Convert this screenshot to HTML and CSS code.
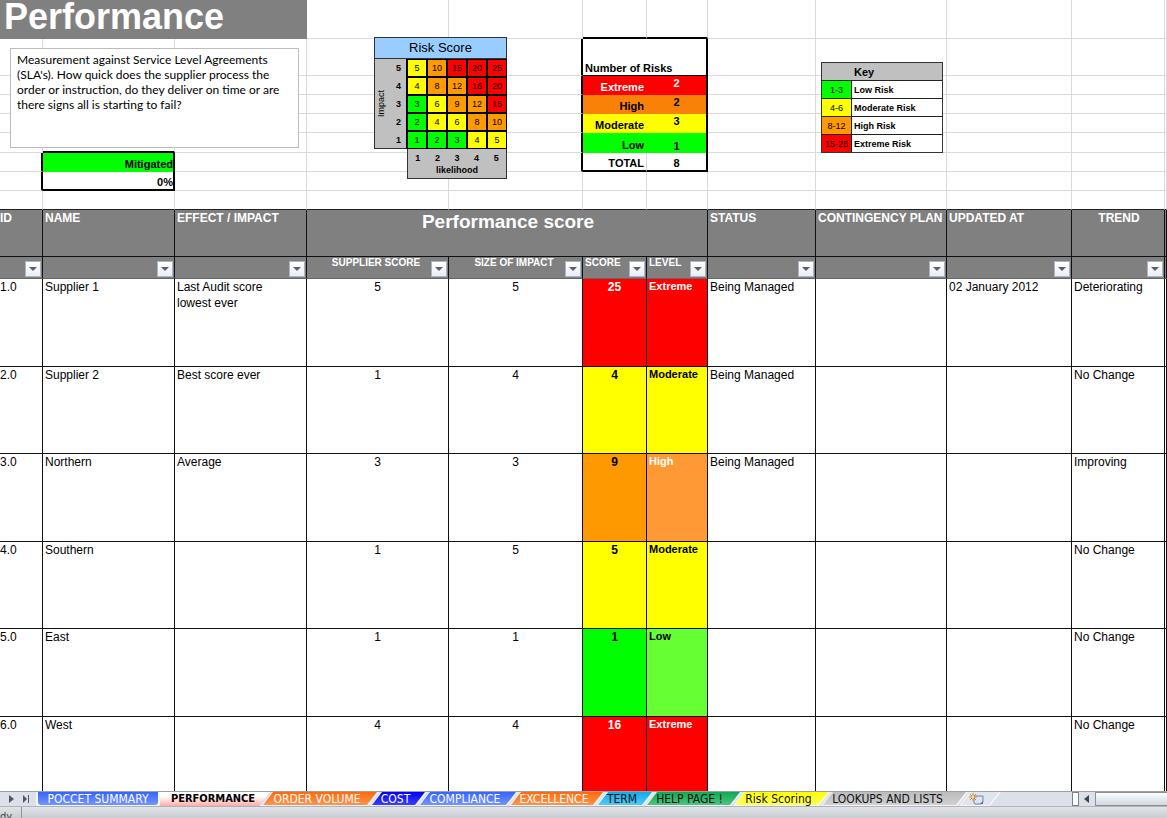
FILE: index.html
```html
<!DOCTYPE html>
<html lang="en">
<head>
<meta charset="utf-8">
<title>Performance</title>
<link rel="stylesheet" href="styles.css">
</head>
<body>
<main class="sheet">
<table class="cells">
<colgroup><col class="c-id"><col class="c-name"><col class="c-name"><col class="c-supplier"><col class="c-size"><col class="c-score"><col class="c-level"><col class="c-status"><col class="c-plan"><col class="c-updated"><col class="c-trend"><col class="c-rest"></colgroup>
<tbody class="top">
<tr class="r-title"><td colspan="3" class="title"><h1>Performance</h1></td><td></td><td></td><td class="line-b"></td><td class="line-b"></td><td></td><td></td><td></td><td></td><td></td></tr>
<tr class="r-tall"><td></td><td></td><td></td><td></td><td class="line-r"></td><td colspan="2" class="line-r thin-b risks-head">Number of Risks</td><td></td><td></td><td></td><td></td><td></td></tr>
<tr><td></td><td></td><td></td><td></td><td class="line-r"></td><td class="risk extreme">Extreme</td><td class="count extreme line-r">2</td><td></td><td></td><td></td><td></td><td></td></tr>
<tr><td></td><td></td><td></td><td></td><td class="line-r"></td><td class="risk high">High</td><td class="count high line-r">2</td><td></td><td></td><td></td><td></td><td></td></tr>
<tr><td></td><td></td><td></td><td></td><td class="line-r"></td><td class="risk moderate">Moderate</td><td class="count moderate line-r">3</td><td></td><td></td><td></td><td></td><td></td></tr>
<tr class="r-mid"><td></td><td class="line-b"></td><td></td><td></td><td class="line-r"></td><td class="risk low">Low</td><td class="count low low-count line-r">1</td><td></td><td></td><td></td><td></td><td></td></tr>
<tr><td class="line-r"></td><td class="mitigated line-r">Mitigated</td><td></td><td></td><td class="line-r"></td><td class="risk line-b">TOTAL</td><td class="count total line-r line-b">8</td><td></td><td></td><td></td><td></td><td></td></tr>
<tr><td class="line-r"></td><td class="percent line-r line-b">0%</td><td></td><td></td><td></td><td></td><td></td><td></td><td></td><td></td><td></td><td></td></tr>
<tr class="r-last"><td></td><td></td><td></td><td></td><td></td><td></td><td></td><td></td><td></td><td></td><td></td><td></td></tr>
</tbody>
<tbody class="head">
<tr class="r-names"><th class="first" scope="col">ID</th><th scope="col">NAME</th><th scope="col">EFFECT / IMPACT</th><th class="group" colspan="4" scope="colgroup">Performance score</th><th scope="col">STATUS</th><th scope="col">CONTINGENCY PLAN</th><th scope="col">UPDATED AT</th><th class="mid" scope="col">TREND</th><th></th></tr>
<tr class="r-filter">
<th><div class="filter"><button aria-label="Filter ID"></button></div></th>
<th><div class="filter"><button aria-label="Filter name"></button></div></th>
<th><div class="filter"><button aria-label="Filter effect"></button></div></th>
<th scope="col"><div class="filter"><span class="centered">SUPPLIER SCORE</span><button aria-label="Filter supplier score"></button></div></th>
<th scope="col"><div class="filter"><span class="centered">SIZE OF IMPACT</span><button aria-label="Filter size of impact"></button></div></th>
<th scope="col"><div class="filter"><span>SCORE</span><button aria-label="Filter score"></button></div></th>
<th scope="col"><div class="filter"><span>LEVEL</span><button aria-label="Filter level"></button></div></th>
<th><div class="filter"><button aria-label="Filter status"></button></div></th>
<th><div class="filter"><button aria-label="Filter contingency plan"></button></div></th>
<th><div class="filter"><button aria-label="Filter updated at"></button></div></th>
<th><div class="filter"><button aria-label="Filter trend"></button></div></th>
<th></th></tr>
</tbody>
<tbody class="data">
<tr><td class="first">1.0</td><td>Supplier 1</td><td class="effect">Last Audit score lowest ever</td><td class="mid">5</td><td class="mid">5</td><td class="score extreme">25</td><td class="level extreme">Extreme</td><td>Being Managed</td><td></td><td>02 January 2012</td><td>Deteriorating</td><td></td></tr>
<tr><td class="first">2.0</td><td>Supplier 2</td><td class="effect">Best score ever</td><td class="mid">1</td><td class="mid">4</td><td class="score moderate">4</td><td class="level moderate">Moderate</td><td>Being Managed</td><td></td><td></td><td>No Change</td><td></td></tr>
<tr><td class="first">3.0</td><td>Northern</td><td class="effect">Average</td><td class="mid">3</td><td class="mid">3</td><td class="score amber">9</td><td class="level soft-high">High</td><td>Being Managed</td><td></td><td></td><td>Improving</td><td></td></tr>
<tr><td class="first">4.0</td><td>Southern</td><td></td><td class="mid">1</td><td class="mid">5</td><td class="score moderate">5</td><td class="level moderate">Moderate</td><td></td><td></td><td></td><td>No Change</td><td></td></tr>
<tr><td class="first">5.0</td><td>East</td><td></td><td class="mid">1</td><td class="mid">1</td><td class="score low">1</td><td class="level soft-low">Low</td><td></td><td></td><td></td><td>No Change</td><td></td></tr>
<tr><td class="first">6.0</td><td>West</td><td></td><td class="mid">4</td><td class="mid">4</td><td class="score extreme">16</td><td class="level extreme">Extreme</td><td></td><td></td><td></td><td>No Change</td><td></td></tr>
</tbody>
</table>

<p class="note">Measurement against Service Level Agreements (SLA's). How quick does the supplier process the order or instruction, do they deliver on time or are there signs all is starting to fail?</p>

<table class="matrix">
<tr><th class="matrix-title" colspan="7">Risk Score</th></tr>
<tr><th class="axis" rowspan="5"><span>Impact</span></th><th class="side">5</th><td class="moderate">5</td><td class="amber">10</td><td class="red">15</td><td class="red">20</td><td class="red">25</td></tr>
<tr><th class="side">4</th><td class="moderate">4</td><td class="amber">8</td><td class="amber">12</td><td class="red">16</td><td class="red">20</td></tr>
<tr><th class="side">3</th><td class="low">3</td><td class="moderate">6</td><td class="amber">9</td><td class="amber">12</td><td class="red">15</td></tr>
<tr><th class="side">2</th><td class="low">2</td><td class="moderate">4</td><td class="moderate">6</td><td class="amber">8</td><td class="amber">10</td></tr>
<tr><th class="side last">1</th><td class="low">1</td><td class="low">2</td><td class="low">3</td><td class="moderate">4</td><td class="moderate">5</td></tr>
<tr><th class="blank" colspan="2"></th><th class="foot" colspan="5"><div class="scale"><span>1</span><span>2</span><span>3</span><span>4</span><span>5</span></div>likelihood</th></tr>
</table>

<table class="key">
<tr><th colspan="2">Key</th></tr>
<tr><td class="low">1-3</td><td>Low Risk</td></tr>
<tr><td class="moderate">4-6</td><td>Moderate Risk</td></tr>
<tr><td class="amber">8-12</td><td>High Risk</td></tr>
<tr><td class="red">15-25</td><td>Extreme Risk</td></tr>
</table>
</main>

<nav class="tabs" aria-label="Sheets">
<button class="nav-btn" aria-label="Next sheet"><svg width="6" height="8" viewBox="0 0 6 8"><path d="M0 0L5 4L0 8Z" fill="#505866"/></svg></button>
<button class="nav-btn" aria-label="Last sheet"><svg width="7" height="8" viewBox="0 0 7 8"><path d="M0 0L4 4L0 8ZM5 0H6V8H5Z" fill="#505866"/></svg></button>
<button class="tab t-summary blue">POCCET SUMMARY</button>
<button class="tab t-performance active" aria-current="page">PERFORMANCE</button>
<button class="tab t-order orange">ORDER VOLUME</button>
<button class="tab t-cost navy">COST</button>
<button class="tab t-compliance blue">COMPLIANCE</button>
<button class="tab t-excellence orange">EXCELLENCE</button>
<button class="tab t-term sky">TERM</button>
<button class="tab t-help green">HELP PAGE !</button>
<button class="tab t-scoring yellow">Risk Scoring</button>
<button class="tab t-lookups silver">LOOKUPS AND LISTS</button>
<button class="tab t-new plain" aria-label="Insert sheet"><svg width="16" height="12" viewBox="0 0 16 12"><path d="M5 3H14V9L12 11H6L5 10Z" fill="#d9e4f5" stroke="#6c86b5"/><path d="M14 8L11 11H14Z" fill="#47659c"/><path d="M4 0V8M0 4H8M1 1L7 7M7 1L1 7" stroke="#e08a24"/><circle cx="4" cy="4" r="1" fill="#fff3c0"/></svg></button>
<div class="scroll"><span class="split"></span><button class="nav-btn" aria-label="Scroll left"><svg width="5" height="8" viewBox="0 0 5 8"><path d="M5 0L0 4L5 8Z" fill="#40454d"/></svg></button><span class="thumb"></span></div>
</nav>
<footer class="status"><span>dy</span></footer>
</body>
</html>
```

FILE: styles.css
```css
* { box-sizing: border-box; }

body {
  margin: 0;
  height: 100vh;
  display: flex;
  flex-direction: column;
  overflow: hidden;
  background: #fff;
  color: #000;
  font: 12px/16px "Liberation Sans", Arial, sans-serif;
}

button { border: 0; padding: 0; font: inherit; color: inherit; background: none; }
table { border-collapse: separate; border-spacing: 0; }
td, th { padding: 0; }

.sheet { position: relative; flex: 1; min-height: 0; overflow: hidden; }

.cells { width: 100%; table-layout: fixed; }
.c-id { width: 43px; }
.c-name { width: 132px; }
.c-supplier { width: 142px; }
.c-size { width: 134px; }
.c-score { width: 64px; }
.c-level { width: 61px; }
.c-status { width: 108px; }
.c-plan { width: 131px; }
.c-updated { width: 125px; }
.c-trend { width: 93px; }
.c-rest { width: 2px; }

/* risk colours */
.extreme { background: #f00; color: #fff; }
.red { background: #f00; }
.high { background: #fa8107; }
.amber { background: #f90; }
.moderate { background: #ff0; }
.low { background: #0f0; }
.soft-high { background: #f93; color: #fff; }
.soft-low { background: #6f3; }

/* upper block */
.top td {
  height: 19px;
  border-right: 1px solid #dadada;
  border-bottom: 1px solid #dadada;
  font-weight: bold;
  font-size: 11px;
  line-height: 14px;
  white-space: nowrap;
  vertical-align: bottom;
}
.top .r-title td { height: 39px; }
.top .r-tall td { height: 37px; }
.top .r-mid td { height: 20px; }
.top .r-last td { border-bottom-color: #222; }
.top .title { background: #808080; border-color: #808080; vertical-align: top; }
h1 { margin: 0; padding-left: 4px; font-size: 36px; line-height: 34px; color: #fff; }

.top .line-r { border-right: 2px solid #000; }
.top .line-b { border-bottom: 2px solid #000; }
.top .thin-b { border-bottom: 1px solid #000; }
.top .risks-head { padding-left: 2px; }
.top .risk { padding-right: 2px; text-align: right; }
.top .count { text-align: center; vertical-align: top; }
.top .low-count, .top .total { vertical-align: bottom; }
.top .risk.extreme { border-color: #f00; }
.top .risk.high { border-color: #fa8107; }
.top .risk.moderate { border-color: #ff0; }
.top .risk.low { border-color: #0f0; }
.top .count.extreme, .top .count.high, .top .count.moderate, .top .count.low, .top .mitigated { border-bottom: 0; }
.top .mitigated { background: #0f0; padding-bottom: 1px; text-align: right; }
.top .percent { text-align: right; }

/* column heads */
.head th {
  padding: 1px 0 0 2px;
  background: #808080;
  color: #fff;
  border-right: 1px solid #111;
  border-bottom: 1px solid #111;
  line-height: 14px;
  text-align: left;
  vertical-align: top;
  white-space: nowrap;
}
.r-names th { height: 47px; }
.head .first, .data .first { padding-left: 0; }
.head .mid, .data .mid { text-align: center; }
.head .group { padding-top: 2px; font-size: 19px; line-height: 20px; text-align: center; }
.r-filter th { height: 22px; padding: 0 1px 0 2px; border-bottom-color: #666; }
.filter { display: flex; height: 21px; justify-content: flex-end; font-size: 10px; line-height: 12px; }
.filter span { flex: 1; }
.filter .centered { padding-left: 12px; text-align: center; }
.filter button {
  align-self: flex-end;
  display: grid;
  place-items: center;
  width: 16px;
  height: 16px;
  margin-bottom: 1px;
  flex: none;
  border: 1px solid #a9b4c4;
  background: linear-gradient(#fff, #e9edf5);
}
.filter button::before {
  content: "";
  border: 4px solid transparent;
  border-top-color: #5a5f68;
  border-bottom: 0;
}

/* records */
.data td {
  height: 87px;
  padding: 0 2px;
  border-right: 1px solid #111;
  border-bottom: 1px solid #111;
  vertical-align: top;
}
.data tr:nth-child(odd) td { height: 88px; }
.data .effect { padding-right: 24px; }
.data .score { font-weight: bold; text-align: center; }
.data .level { font-weight: bold; font-size: 11px; line-height: 15px; }

/* objects floating over the cells */
.note {
  position: absolute;
  left: 10px;
  top: 48px;
  width: 289px;
  height: 100px;
  margin: 0;
  padding: 3px 6px;
  background: #fff;
  border: 1px solid #bcbcbc;
  font: 12px/15px Lato, "Open Sans", sans-serif;
}

.matrix { position: absolute; left: 374px; top: 37px; font-size: 9px; line-height: 12px; }
.matrix .matrix-title {
  height: 22px;
  background: #9cf;
  border: 1px solid #333;
  font-weight: normal;
  font-size: 13px;
}
.matrix td { width: 20px; height: 18px; border: 1px solid #000; text-align: center; }
.matrix .axis { width: 17px; background: #c0c0c0; border: 1px solid #333; border-width: 0 0 1px 1px; font-weight: normal; }
.matrix .axis span { display: block; writing-mode: vertical-rl; transform: rotate(180deg); }
.matrix .side { width: 16px; background: #c0c0c0; border-right: 1px solid #000; }
.matrix .last { border-bottom: 1px solid #333; }
.matrix .foot { height: 30px; background: #c0c0c0; border: 1px solid #333; border-top: 0; }
.scale { display: grid; grid-template-columns: repeat(5, 1fr); }

.key {
  position: absolute;
  left: 821px;
  top: 62px;
  width: 122px;
  border: 1px solid #333;
  background: #fff;
  font-size: 9px;
  line-height: 12px;
  font-weight: bold;
}
.key th { height: 17px; padding-left: 32px; background: #c0c0c0; font-size: 11px; text-align: left; }
.key td { height: 18px; padding-left: 2px; border-top: 1px solid #222; }
.key td:first-child { width: 30px; padding: 0; border-right: 1px solid #222; font-weight: normal; text-align: center; }

/* sheet tabs */
.tabs {
  flex: none;
  display: flex;
  height: 16px;
  padding-left: 4px;
  background: #dce0e9;
  border-top: 1px solid #9a9ea5;
  border-bottom: 1px solid #aeb3bb;
  font: 12px/14px "DejaVu Sans Condensed", "DejaVu Sans", sans-serif;
}
.nav-btn { display: grid; place-items: center; width: 15px; }
.tab {
  position: relative;
  isolation: isolate;
  flex: none;
  height: 14px;
  margin-right: -9px;
  padding-right: 6px;
  background: #f4f6fa;
  clip-path: polygon(11px 0, 100% 0, calc(100% - 11px) 100%, 0 100%);
  text-align: center;
  white-space: nowrap;
  color: #fff;
}
.tab::before {
  content: "";
  position: absolute;
  z-index: -1;
  inset: 0 2px 1px;
  clip-path: polygon(10px 0, 100% 0, calc(100% - 10px) 100%, 0 100%);
}
.blue::before { background: linear-gradient(#3564ff, #7595ff); }
.orange::before { background: linear-gradient(#ff6a0a, #ff934c); }
.navy::before { background: linear-gradient(#0202f5, #3d3dff); }
.sky::before { background: linear-gradient(#0cacec, #55c9f5); }
.green::before { background: linear-gradient(#0cab50, #4dc481); }
.yellow::before { background: linear-gradient(#ff0, #ffff58); }
.silver::before { background: linear-gradient(#bcbcbc, #d0d0d0); }
.plain::before { background: #e0e4ec; }
.sky, .green, .yellow, .silver { color: #111; }
.t-summary { width: 124px; margin-left: 2px; margin-right: 0; padding: 0; }
.t-summary, .t-summary::before { clip-path: none; border-radius: 0 0 3px 3px; }
.t-performance { width: 110px; padding-right: 4px; }
.active { background: linear-gradient(#fff 30%, #ffaaa6); color: #000; font-weight: bold; font-size: 11px; clip-path: polygon(0 0, 100% 0, calc(100% - 11px) 100%, 0 100%); }
.t-order { width: 118px; }
.t-cost { width: 57px; }
.t-compliance { width: 100px; }
.t-excellence { width: 96px; }
.t-term { width: 58px; }
.t-help { width: 97px; padding-right: 8px; }
.t-scoring { width: 97px; }
.t-lookups { width: 147px; padding-right: 14px; }
.t-new { width: 42px; display: grid; place-items: center; }
.scroll { display: flex; width: 95px; margin-left: auto; }
.split { width: 7px; border: 1px solid #7c828c; background: #fff; }
.thumb { flex: 1; margin-left: 1px; border: 1px solid #8b9098; border-right: 0; background: linear-gradient(#fbfcfd, #d3d7de); }

.status {
  flex: none;
  height: 11px;
  overflow: hidden;
  background: linear-gradient(#e1e4e8, #c9cdd2);
  font: 11px/14px "DejaVu Sans Condensed", "DejaVu Sans", sans-serif;
  color: #444;
}
.status span { display: block; width: 22px; padding-top: 3px; border-right: 1px solid #8f949b; }
```
